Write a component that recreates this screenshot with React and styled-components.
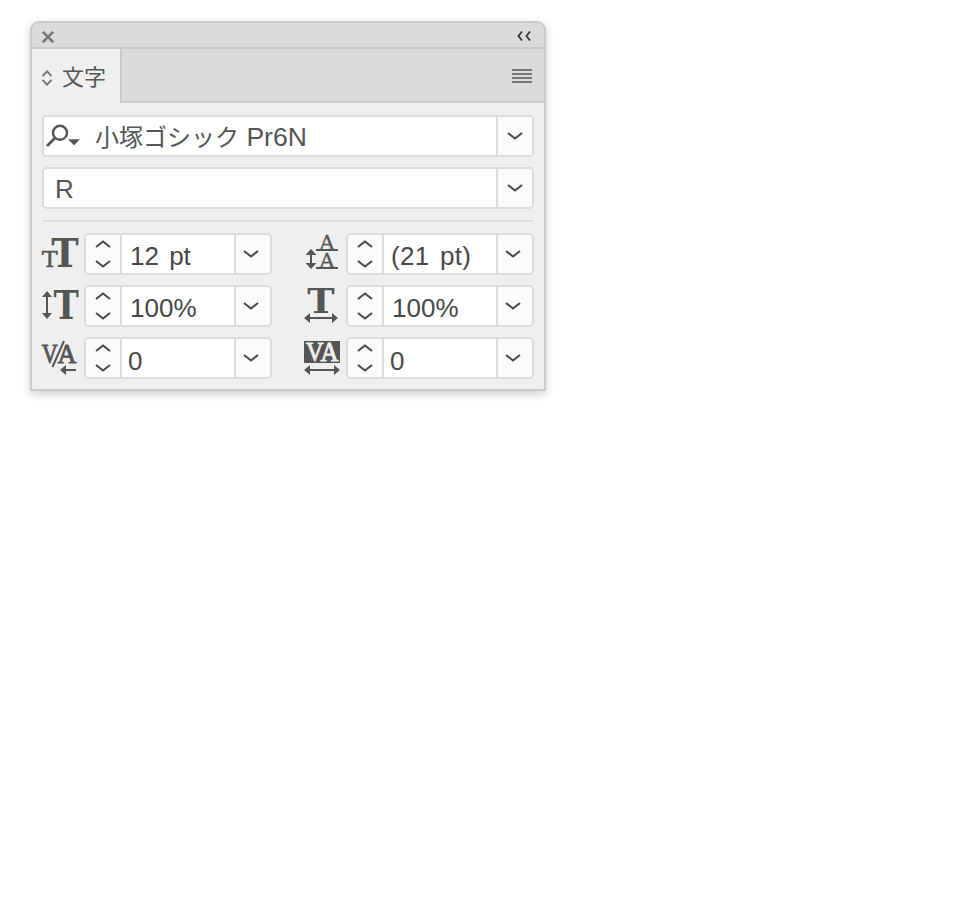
import React from 'react';
import styled, { createGlobalStyle } from "styled-components";

const settings = [
    { name: "size", value: "12 pt", Icon: FontSizeIcon },
    { name: "leading", value: "(21 pt)", Icon: LeadingIcon },
    { name: "vertical", value: "100%", Icon: VerticalScaleIcon },
    { name: "horizontal", value: "100%", Icon: HorizontalScaleIcon },
    { name: "kerning", value: "0", Icon: KerningIcon },
    { name: "tracking", value: "0", Icon: TrackingIcon },
];

function App() {
    return (
        <Page>
            <GlobalStyle />
            <Panel>
                <TitleBar>
                    <CloseIcon />
                    <CollapseIcon />
                </TitleBar>
                <TabBar>
                    <Tab>
                        <SortIcon />
                        <TabName>文字</TabName>
                    </Tab>
                    <TabSpace>
                        <MenuIcon />
                    </TabSpace>
                </TabBar>
                <Body>
                    <Field>
                        <SearchIcon />
                        <FontName>小塚ゴシック <Latin>Pr6N</Latin></FontName>
                        <DropButton><Chevron /></DropButton>
                    </Field>
                    <Field>
                        <StyleName>R</StyleName>
                        <DropButton><Chevron /></DropButton>
                    </Field>
                    <Divider />
                    <Grid>
                        {settings.map(({ name, value, Icon }) => (
                            <Setting key={name}>
                                <Icon />
                                <NumberField>
                                    <Stepper>
                                        <Chevron up />
                                        <Chevron />
                                    </Stepper>
                                    <Value $zero={value === "0"} $paren={value[0] === "("}>{value}</Value>
                                    <DropButton $small><Chevron /></DropButton>
                                </NumberField>
                            </Setting>
                        ))}
                    </Grid>
                </Body>
            </Panel>
        </Page>
    )
}

export default App;

function Chevron({ up }) {
    return (
        <svg width="16" height="8" viewBox="0 0 16 8">
            <path d={up ? "M1 7 8 1.5 15 7" : "M1 1 8 6.5 15 1"} fill="none" stroke="#484848" strokeWidth="2" />
        </svg>
    )
}

function CloseIcon() {
    return (
        <svg width="12" height="12" viewBox="0 0 12 12">
            <path d="M.8 .8 11.2 11.2M11.2 .8 .8 11.2" stroke="#777" strokeWidth="2.6" />
        </svg>
    )
}

function CollapseIcon() {
    return (
        <svg width="14" height="10" viewBox="0 0 14 10">
            <path d="M5 .5 1.5 5 5 9.5M13 .5 9.5 5 13 9.5" fill="none" stroke="#3c3c3c" strokeWidth="1.9" />
        </svg>
    )
}

function SortIcon() {
    return (
        <svg width="10" height="16" viewBox="0 0 10 16">
            <path d="M.5 6.2 5 1.3 9.5 6.2M.5 9.8 5 14.7 9.5 9.8" fill="none" stroke="#777" strokeWidth="1.9" />
        </svg>
    )
}

function MenuIcon() {
    return (
        <svg width="20" height="14" viewBox="0 0 20 14">
            <path d="M0 1H20M0 5H20M0 9H20M0 13H20" stroke="#777" strokeWidth="2" />
        </svg>
    )
}

function SearchIcon() {
    return (
        <svg width="36" height="24" viewBox="0 0 36 24">
            <circle cx="16" cy="8.8" r="7" fill="none" stroke="#555" strokeWidth="2.4" />
            <path d="M11 14 3 22" stroke="#555" strokeWidth="2.6" />
            <path d="M24 15.3H36L30 21.3Z" fill="#555" />
        </svg>
    )
}

function FontSizeIcon() {
    return (
        <SettingIcon>
            <Slab $thin x="-.2" y="34" fontSize="22" textLength="16">T</Slab>
            <Slab x="9.3" y="34" fontSize="38.4" textLength="27.4">T</Slab>
        </SettingIcon>
    )
}

function VerticalScaleIcon() {
    return (
        <SettingIcon>
            <path d="M5 9V31" stroke="#555" strokeWidth="2" />
            <path d="M5 6 10 12H0ZM5 34 0 28H10Z" />
            <Slab x="11.4" y="34" fontSize="38.4" textLength="25.3">T</Slab>
        </SettingIcon>
    )
}

function KerningIcon() {
    return (
        <SettingIcon>
            <Serif x="-.3" y="26" fontSize="27.5" textLength="16">V</Serif>
            <Serif x="15.5" y="26" fontSize="27.5" textLength="19">A</Serif>
            <path d="M10.5 30 22 4" stroke="#555" strokeWidth="2" />
            <path d="M22 33H34" stroke="#555" strokeWidth="2" />
            <path d="M18 33 24 28V38Z" />
        </SettingIcon>
    )
}

function LeadingIcon() {
    return (
        <SettingIcon>
            <path d="M7 19V33" stroke="#555" strokeWidth="2" />
            <path d="M7 16 12.5 22H1.5ZM7 36 1.5 30H12.5Z" />
            <Slab $thin x="15.5" y="16.5" fontSize="20" textLength="15">A</Slab>
            <Slab $thin x="15.5" y="34.5" fontSize="20" textLength="15">A</Slab>
            <path d="M12 17H34M12 35H34" stroke="#555" strokeWidth="2" />
        </SettingIcon>
    )
}

function HorizontalScaleIcon() {
    return (
        <SettingIcon>
            <Slab x="3.3" y="28" fontSize="33" textLength="27.4">T</Slab>
            <path d="M4 33H30" stroke="#555" strokeWidth="2" />
            <path d="M0 33 6 28V38ZM34 33 28 28V38Z" />
        </SettingIcon>
    )
}

function TrackingIcon() {
    return (
        <SettingIcon>
            <path d="M0 4H36V26H0Z" />
            <Serif $light x="2" y="24" fontSize="27" textLength="17.5">V</Serif>
            <Serif $light x="16.5" y="24" fontSize="27" textLength="18">A</Serif>
            <path d="M4 33H32" stroke="#555" strokeWidth="2" />
            <path d="M0 33 6 28V38ZM36 33 30 28V38Z" />
        </SettingIcon>
    )
}

const GlobalStyle = createGlobalStyle`
body{
    margin:0;
    background:#fff;
}

*{
    box-sizing:border-box;
}

svg{
    display:block;
    flex:none;
}
`

const Page = styled.div`
min-height:900px;
padding:21px 0 0 30px;
font-family:"Liberation Sans", "Noto Sans CJK JP", sans-serif;
color:#555;
`

const Panel = styled.div`
width:516px;
height:370px;
border:2px solid #cacaca;
border-radius:9px 9px 0 0;
background:#efefef;
box-shadow:0 3px 9px rgba(0,0,0,.2);
overflow:hidden;
`

const TitleBar = styled.div`
display:flex;
justify-content:space-between;
height:26px;
padding:8px 13px 0 10px;
background:#dbdbdb;
border-bottom:2px solid #cacaca;
`

const TabBar = styled.div`
display:flex;
height:54px;
`

const Tab = styled.div`
display:flex;
align-items:center;
width:88px;
padding:4px 0 0 10px;
`

const TabName = styled.span`
margin:-6px 0 0 10px;
font:22px/30px "Noto Sans CJK JP", sans-serif;
`

const TabSpace = styled.div`
display:flex;
flex:1;
justify-content:flex-end;
padding:20px 12px 0 0;
background:#dbdbdb;
border-left:2px solid #cacaca;
border-bottom:2px solid #cacaca;
`

const Body = styled.div`
display:flex;
flex-direction:column;
gap:10px;
padding:12px 10px 0;
`

const Field = styled.div`
display:flex;
align-items:center;
height:42px;
border:2px solid #dcdcdc;
border-radius:5px;
background:#fff;
overflow:hidden;
`

const FontName = styled.span`
flex:1;
margin:-1px 0 0 15px;
white-space:pre;
font:24px/38px "Noto Sans CJK JP", sans-serif;
`

const Latin = styled.span`
margin-left:2px;
font:26.5px/30px "Liberation Sans", sans-serif;
`

const StyleName = styled.span`
flex:1;
padding:2px 0 0 11px;
font-size:26px;
line-height:36px;
`

const DropButton = styled.div`
display:flex;
align-items:center;
justify-content:center;
width:36px;
height:38px;
padding-right:${p => p.$small ? "4px" : "0"};
border-left:2px solid #dcdcdc;
background:#fbfbfb;
`

const Divider = styled.div`
height:2px;
margin-top:1px;
background:#e0e0e0;
`

const Grid = styled.div`
display:grid;
grid-template-columns:230px 230px;
gap:10px 32px;
margin-top:1px;
`

const Setting = styled.div`
display:flex;
`

const SettingIcon = styled.svg.attrs({ width: 36, height: 42, viewBox: "0 0 36 42" })`
margin-right:6px;
fill:#555;
overflow:visible;
`

const Slab = styled.text.attrs({ lengthAdjust: "spacingAndGlyphs" })`
font-family:"DejaVu Serif", serif;
font-weight:${p => p.$thin ? "normal" : "bold"};
stroke:#555;
stroke-width:${p => p.$thin ? ".4px" : "0"};
`

const Serif = styled.text.attrs({ lengthAdjust: "spacingAndGlyphs" })`
font-family:"Liberation Serif", serif;
fill:${p => p.$light ? "#efefef" : "#555"};
stroke:${p => p.$light ? "#efefef" : "#555"};
stroke-width:.9px;
`

const NumberField = styled(Field)`
width:188px;
`

const Stepper = styled.div`
display:flex;
flex-direction:column;
align-items:center;
justify-content:space-between;
width:36px;
height:38px;
padding:5px 0;
border-right:2px solid #dcdcdc;
background:#fbfbfb;
`

const Value = styled.span`
flex:1;
padding-left:${p => p.$zero ? "6px" : p.$paren ? "7px" : "8px"};
padding-top:${p => p.$zero ? "6px" : "3px"};
white-space:pre;
color:#484848;
font-size:26px;
line-height:36px;
letter-spacing:${p => p.$paren ? ".3px" : "0"};
word-spacing:3px;
`
